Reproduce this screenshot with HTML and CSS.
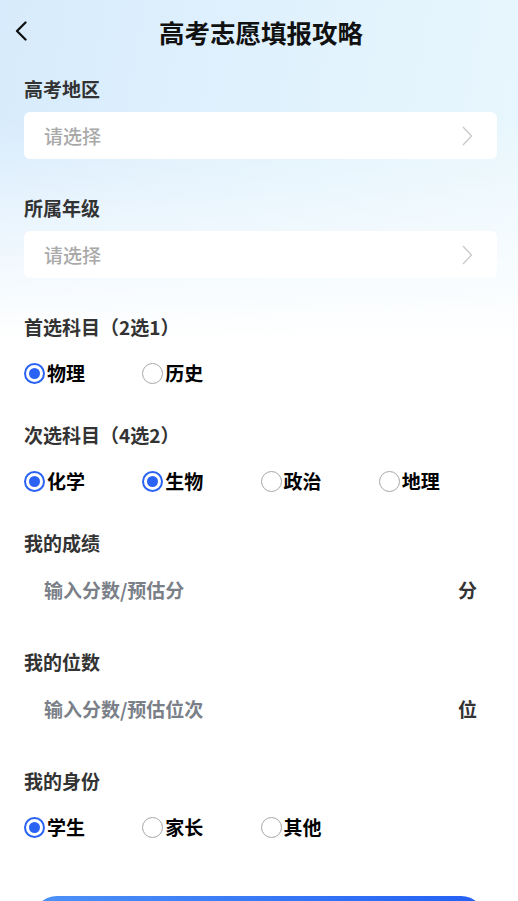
FILE: index.html
```html
<!DOCTYPE html>
<html lang="zh-CN">
<head>
<meta charset="utf-8">
<title>高考志愿填报攻略</title>
<link rel="stylesheet" href="styles.css">
</head>
<body>
<div class="page">
  <header class="header">
    <button class="back" aria-label="返回">
      <svg width="14" height="20" viewBox="0 0 14 20"><path d="M11.5 1.5 L3 10 L11.5 18.5" fill="none" stroke="#111" stroke-width="2.3" stroke-linecap="round" stroke-linejoin="round"/></svg>
    </button>
    <h1 class="title">高考志愿填报攻略</h1>
  </header>

  <main class="form">
    <section class="field">
      <div class="label">高考地区</div>
      <div class="box">
        <span class="placeholder">请选择</span>
        <svg class="chev" width="11" height="20" viewBox="0 0 11 20"><path d="M1 1 L9.5 10 L1 19" fill="none" stroke="#c9c9c9" stroke-width="1.3"/></svg>
      </div>
    </section>

    <section class="field">
      <div class="label">所属年级</div>
      <div class="box">
        <span class="placeholder">请选择</span>
        <svg class="chev" width="11" height="20" viewBox="0 0 11 20"><path d="M1 1 L9.5 10 L1 19" fill="none" stroke="#c9c9c9" stroke-width="1.3"/></svg>
      </div>
    </section>

    <section class="field radio-field">
      <div class="label">首选科目（2选1）</div>
      <div class="radios">
        <label class="opt"><span class="dot on"></span>物理</label>
        <label class="opt"><span class="dot"></span>历史</label>
      </div>
    </section>

    <section class="field radio-field">
      <div class="label">次选科目（4选2）</div>
      <div class="radios">
        <label class="opt"><span class="dot on"></span>化学</label>
        <label class="opt"><span class="dot on"></span>生物</label>
        <label class="opt"><span class="dot"></span>政治</label>
        <label class="opt"><span class="dot"></span>地理</label>
      </div>
    </section>

    <section class="field">
      <div class="label">我的成绩</div>
      <div class="box">
        <span class="hint">输入分数/预估分</span>
        <span class="unit">分</span>
      </div>
    </section>

    <section class="field">
      <div class="label">我的位数</div>
      <div class="box">
        <span class="hint">输入分数/预估位次</span>
        <span class="unit">位</span>
      </div>
    </section>

    <section class="field radio-field">
      <div class="label">我的身份</div>
      <div class="radios">
        <label class="opt"><span class="dot on"></span>学生</label>
        <label class="opt"><span class="dot"></span>家长</label>
        <label class="opt"><span class="dot"></span>其他</label>
      </div>
    </section>
  </main>

  <div class="actions">
    <button class="submit" aria-label="提交"></button>
  </div>
</div>
</body>
</html>
```

FILE: styles.css
```css
* { box-sizing: border-box; }
html, body { margin: 0; padding: 0; }
body {
  font-family: "Noto Sans CJK SC", "Noto Sans", sans-serif;
  background: #fff;
  width: 518px;
  height: 901px;
  overflow: hidden;
}
.page {
  min-height: 901px;
  background:
    linear-gradient(180deg, rgba(255,255,255,0) 0px, rgba(255,255,255,0) 120px, #ffffff 340px),
    linear-gradient(100deg, #d7ebfc 0%, #e2f3fd 60%, #e9f7fd 100%);
  background-repeat: no-repeat;
  background-size: 100% 360px, 100% 360px;
}
.header {
  height: 64px;
  display: flex;
  align-items: center;
  justify-content: center;
  position: relative;
}
.back {
  position: absolute;
  left: 14px;
  top: 21px;
  padding: 0;
  border: 0;
  background: none;
  width: 14px;
  height: 20px;
  display: flex;
}
.title {
  margin: 0;
  font-size: 25.5px;
  line-height: 34px;
  font-weight: 700;
  color: #111;
  padding-left: 4px;
}
.form {
  padding: 12px 21px 0 24px;
  display: flex;
  flex-direction: column;
  gap: 36px;
}
.field {
  display: flex;
  flex-direction: column;
  gap: 10px;
}
.radio-field { gap: 20px; }
.label {
  font-size: 19px;
  line-height: 26px;
  font-weight: 700;
  color: #333;
}
.box {
  height: 47px;
  background: #fff;
  border-radius: 6px;
  display: flex;
  align-items: center;
  justify-content: space-between;
  padding: 0 20px 0 20px;
}
.placeholder {
  font-size: 19px;
  color: #a9a9a9;
  font-weight: 500;
}
.chev { margin-right: 4px; margin-top: 1px; }
.hint {
  font-size: 19px;
  color: #7a7f88;
  font-weight: 700;
}
.unit {
  font-size: 19px;
  color: #333;
  font-weight: 700;
}
.radios {
  display: grid;
  grid-template-columns: repeat(4, 1fr);
  height: 26px;
}
.opt {
  display: flex;
  align-items: center;
  gap: 2px;
  font-size: 19px;
  line-height: 26px;
  font-weight: 700;
  color: #000;
}
.dot {
  width: 21px;
  height: 21px;
  border-radius: 50%;
  border: 1.6px solid #a6a6a6;
  background: #fff;
  flex: none;
  position: relative;
}
.dot.on {
  border: 2px solid #2a62f4;
}
.dot.on::after {
  content: "";
  position: absolute;
  left: 50%;
  top: 50%;
  width: 11px;
  height: 11px;
  margin: -5.5px 0 0 -5.5px;
  border-radius: 50%;
  background: #2a62f4;
}
.actions {
  padding: 56px 33px 0 33px;
}
.submit {
  display: block;
  width: 100%;
  height: 48px;
  border: 0;
  border-radius: 24px;
  background: linear-gradient(90deg, #4c92f7 0%, #2460f4 100%);
}
```
